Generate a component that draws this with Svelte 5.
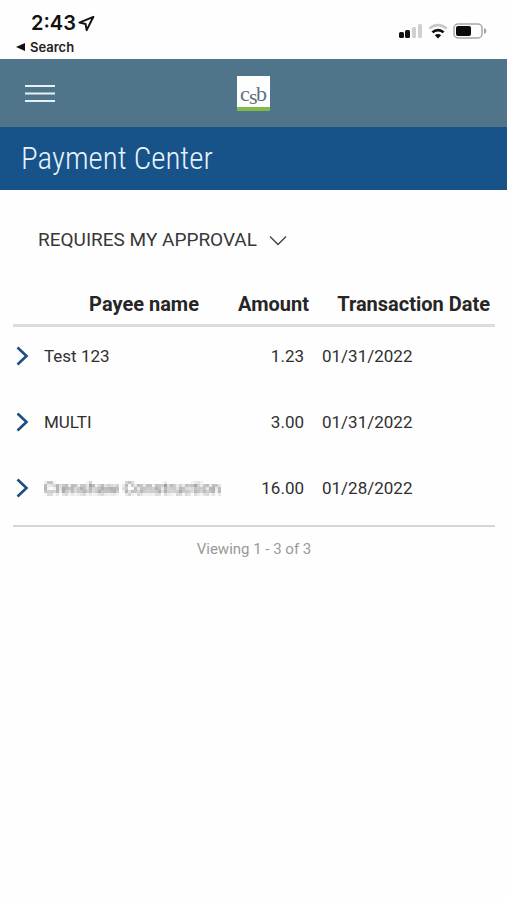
<script lang="ts">
	type Payment = {
		id: number;
		payee: string;
		amount: string;
		date: string;
		redacted?: boolean;
	};

	const payments: Payment[] = [
		{ id: 1, payee: 'Test 123', amount: '1.23', date: '01/31/2022' },
		{ id: 2, payee: 'MULTI', amount: '3.00', date: '01/31/2022' },
		{ id: 3, payee: 'Crenshaw Construction', amount: '16.00', date: '01/28/2022', redacted: true }
	];
</script>

<div class="status-bar">
	<div class="status-left">
		<div class="clock">
			<span>2:43</span>
			<svg width="17" height="17" viewBox="0 0 17 17" aria-hidden="true">
				<path d="M15.4 1.8 L1.4 7.6 L7.6 9 L8.6 15.2 Z" fill="none" stroke="#111" stroke-width="1.9" stroke-linejoin="round" />
			</svg>
		</div>
		<a class="back" href="#search">
			<svg width="9" height="8" viewBox="0 0 9 8" aria-hidden="true">
				<path d="M0 4 L9 0 V8 Z" fill="#111" />
			</svg>
			Search
		</a>
	</div>
	<div class="status-icons">
		<svg width="24" height="16" viewBox="0 0 24 16" aria-hidden="true">
			<rect x="0" y="9" width="5" height="6" rx="1.5" fill="#111" />
			<rect x="6" y="7" width="5" height="8" rx="1.5" fill="#111" />
			<rect x="13" y="4" width="4" height="11" rx="1.5" fill="#d0d0d0" />
			<rect x="19" y="1" width="4" height="14" rx="1.5" fill="#d0d0d0" />
		</svg>
		<svg width="20" height="16" viewBox="0 0 20 16" aria-hidden="true">
			<g fill="none" stroke-width="2.6">
				<path d="M1.4 5.6 A12.5 12.5 0 0 1 18.6 5.6" stroke="#c8c8c8" />
				<path d="M4.4 9.4 A8 8 0 0 1 15.6 9.4" stroke="#111" />
			</g>
			<path d="M10 15.4 L6.8 12.2 A4.6 4.6 0 0 1 13.2 12.2 Z" fill="#111" />
		</svg>
		<svg width="34" height="16" viewBox="0 0 34 16" aria-hidden="true">
			<rect x="1" y="1" width="28" height="14" rx="4" fill="none" stroke="#a6a6a6" stroke-width="1.5" />
			<rect x="3" y="3" width="15" height="10" rx="2" fill="#0a0a0a" />
			<path d="M31 5 Q33.5 6 33.5 8 Q33.5 10 31 11 Z" fill="#a6a6a6" />
		</svg>
	</div>
</div>

<header class="app-header">
	<button class="menu" type="button" aria-label="Menu">
		<svg width="30" height="20" viewBox="0 0 30 20" aria-hidden="true">
			<path d="M0 3 H30 M0 10.5 H30 M0 18 H30" stroke="#e4f1f8" stroke-width="2" />
		</svg>
	</button>
	<svg class="logo" width="33" height="35" viewBox="0 0 33 35" role="img" aria-label="csb">
		<rect width="33" height="35" fill="#fdfefe" />
		<rect y="31" width="33" height="4" fill="#84b84c" />
		<g class="logo-text">
			<text x="3" y="25">c</text>
			<text x="12" y="28">s</text>
			<text x="19" y="25">b</text>
		</g>
	</svg>
</header>

<h1 class="title">Payment Center</h1>

<main>
	<div class="filter">
		<select aria-label="Payment filter">
			<option>REQUIRES MY APPROVAL</option>
		</select>
		<svg width="18" height="11" viewBox="0 0 18 11" aria-hidden="true">
			<path d="M1 1.5 L9 9.5 L17 1.5" fill="none" stroke="#444" stroke-width="1.4" />
		</svg>
	</div>

	<table>
		<colgroup>
			<col class="col-toggle" />
			<col />
			<col class="col-amount" />
			<col class="col-date" />
		</colgroup>
		<thead>
			<tr>
				<td></td>
				<th class="payee" scope="col">Payee name</th>
				<th class="amount" scope="col">Amount</th>
				<th class="date" scope="col">Transaction Date</th>
			</tr>
		</thead>
		<tbody>
			{#each payments as payment (payment.id)}
				<tr>
					<td>
						<button class="toggle" type="button" aria-label="Show details">
							<svg width="13" height="20" viewBox="0 0 13 20" aria-hidden="true">
								<path d="M1.5 1.5 L10.5 10 L1.5 18.5" fill="none" stroke="#1b4f80" stroke-width="2.6" />
							</svg>
						</button>
					</td>
					<td class="payee">
						<span class:redacted={payment.redacted}>{payment.payee}</span>
					</td>
					<td class="amount">{payment.amount}</td>
					<td class="date">{payment.date}</td>
				</tr>
			{/each}
		</tbody>
	</table>

	<p class="summary">Viewing 1 - 3 of 3</p>
</main>

<!-- samples one pixel per 3px cell and grows it to fill the cell -->
<svg class="defs" width="0" height="0" aria-hidden="true">
	<filter id="mosaic" x="0" y="0" width="1" height="1" color-interpolation-filters="sRGB">
		<feGaussianBlur in="SourceGraphic" stdDeviation="1" result="soft" />
		<feFlood x="1" y="1" width="1" height="1" flood-color="#000" />
		<feComposite x="0" y="0" width="3" height="3" />
		<feTile result="grid" />
		<feComposite in="soft" in2="grid" operator="in" />
		<feMorphology operator="dilate" radius="1" />
	</filter>
</svg>

<style>
	:global(body) {
		margin: 0;
		background: #fefefe;
		color: #303030;
		font-family: Roboto, 'Liberation Sans', sans-serif;
	}

	button {
		display: block;
		padding: 0;
		border: 0;
		background: none;
		cursor: pointer;
	}

	svg {
		display: block;
	}

	/* --- Status bar --- */
	.status-bar {
		display: flex;
		justify-content: space-between;
		box-sizing: border-box;
		height: 59px;
		padding: 10px 20px 0 16px;
		color: #111;
		font-family: Inter, sans-serif;
	}

	.clock {
		display: flex;
		align-items: center;
		gap: 2px;
		padding-left: 15px;
		font-size: 20px;
		font-weight: 600;
		line-height: 26px;
	}

	.back {
		display: flex;
		align-items: center;
		gap: 5px;
		color: #222;
		font-size: 13px;
		font-weight: 600;
		line-height: 22px;
		text-decoration: none;
	}

	.status-icons {
		display: flex;
		align-items: flex-start;
		gap: 5px;
		padding-top: 13px;
	}

	/* --- Header --- */
	.app-header {
		display: grid;
		grid-template-columns: 1fr auto 1fr;
		align-items: center;
		height: 68px;
		padding: 0 25px;
		background: #50748a;
	}

	.menu {
		justify-self: start;
	}

	.logo-text {
		fill: #5d7182;
		font-family: 'Liberation Serif', serif;
		font-size: 22px;
	}

	.title {
		margin: 0;
		padding: 0 21px;
		background: #175289;
		color: #e6f3fc;
		font-family: 'Roboto Condensed', 'Liberation Sans Narrow', Roboto, sans-serif;
		font-size: 31px;
		font-weight: 300;
		line-height: 63px;
	}

	/* --- Filter --- */
	main {
		padding: 34px 12px 0 13px;
	}

	.filter {
		display: flex;
		align-items: center;
		padding-left: 25px;
	}

	.filter svg {
		margin-left: -18px;
		pointer-events: none;
	}

	select {
		appearance: none;
		padding: 0 30px 0 0;
		border: 0;
		background: none;
		color: #383838;
		font-family: inherit;
		font-size: 19px;
		line-height: 32px;
		cursor: pointer;
	}

	/* --- Table --- */
	table {
		width: 100%;
		margin-top: 28px;
		border-collapse: collapse;
		border-bottom: 2px solid #d6d6d6;
		table-layout: fixed;
		font-size: 17px;
	}

	.col-toggle {
		width: 31px;
	}

	.col-amount {
		width: 86px;
	}

	.col-date {
		width: 182px;
	}

	th,
	td {
		padding: 0;
		white-space: nowrap;
	}

	thead tr {
		border-bottom: 3px solid #dcdcdc;
	}

	th {
		padding: 10px 0;
		color: #262626;
		font-size: 20px;
		font-weight: 700;
		line-height: 20px;
		text-align: right;
	}

	th.payee {
		padding-right: 28px;
	}

	th.amount {
		padding-right: 4px;
	}

	th.date {
		padding-right: 5px;
	}

	tbody td {
		padding: 19px 0 27px;
		line-height: 20px;
		vertical-align: top;
	}

	td.amount {
		padding-right: 9px;
		text-align: right;
	}

	td.date {
		padding-left: 9px;
	}

	.toggle {
		margin-left: 3px;
	}

	.redacted {
		display: inline-block;
		color: #666;
		filter: url(#mosaic);
		user-select: none;
	}

	.defs {
		position: absolute;
	}

	.summary {
		margin: 11px 0 0;
		color: #999;
		font-size: 15px;
		line-height: 22px;
		text-align: center;
	}
</style>
